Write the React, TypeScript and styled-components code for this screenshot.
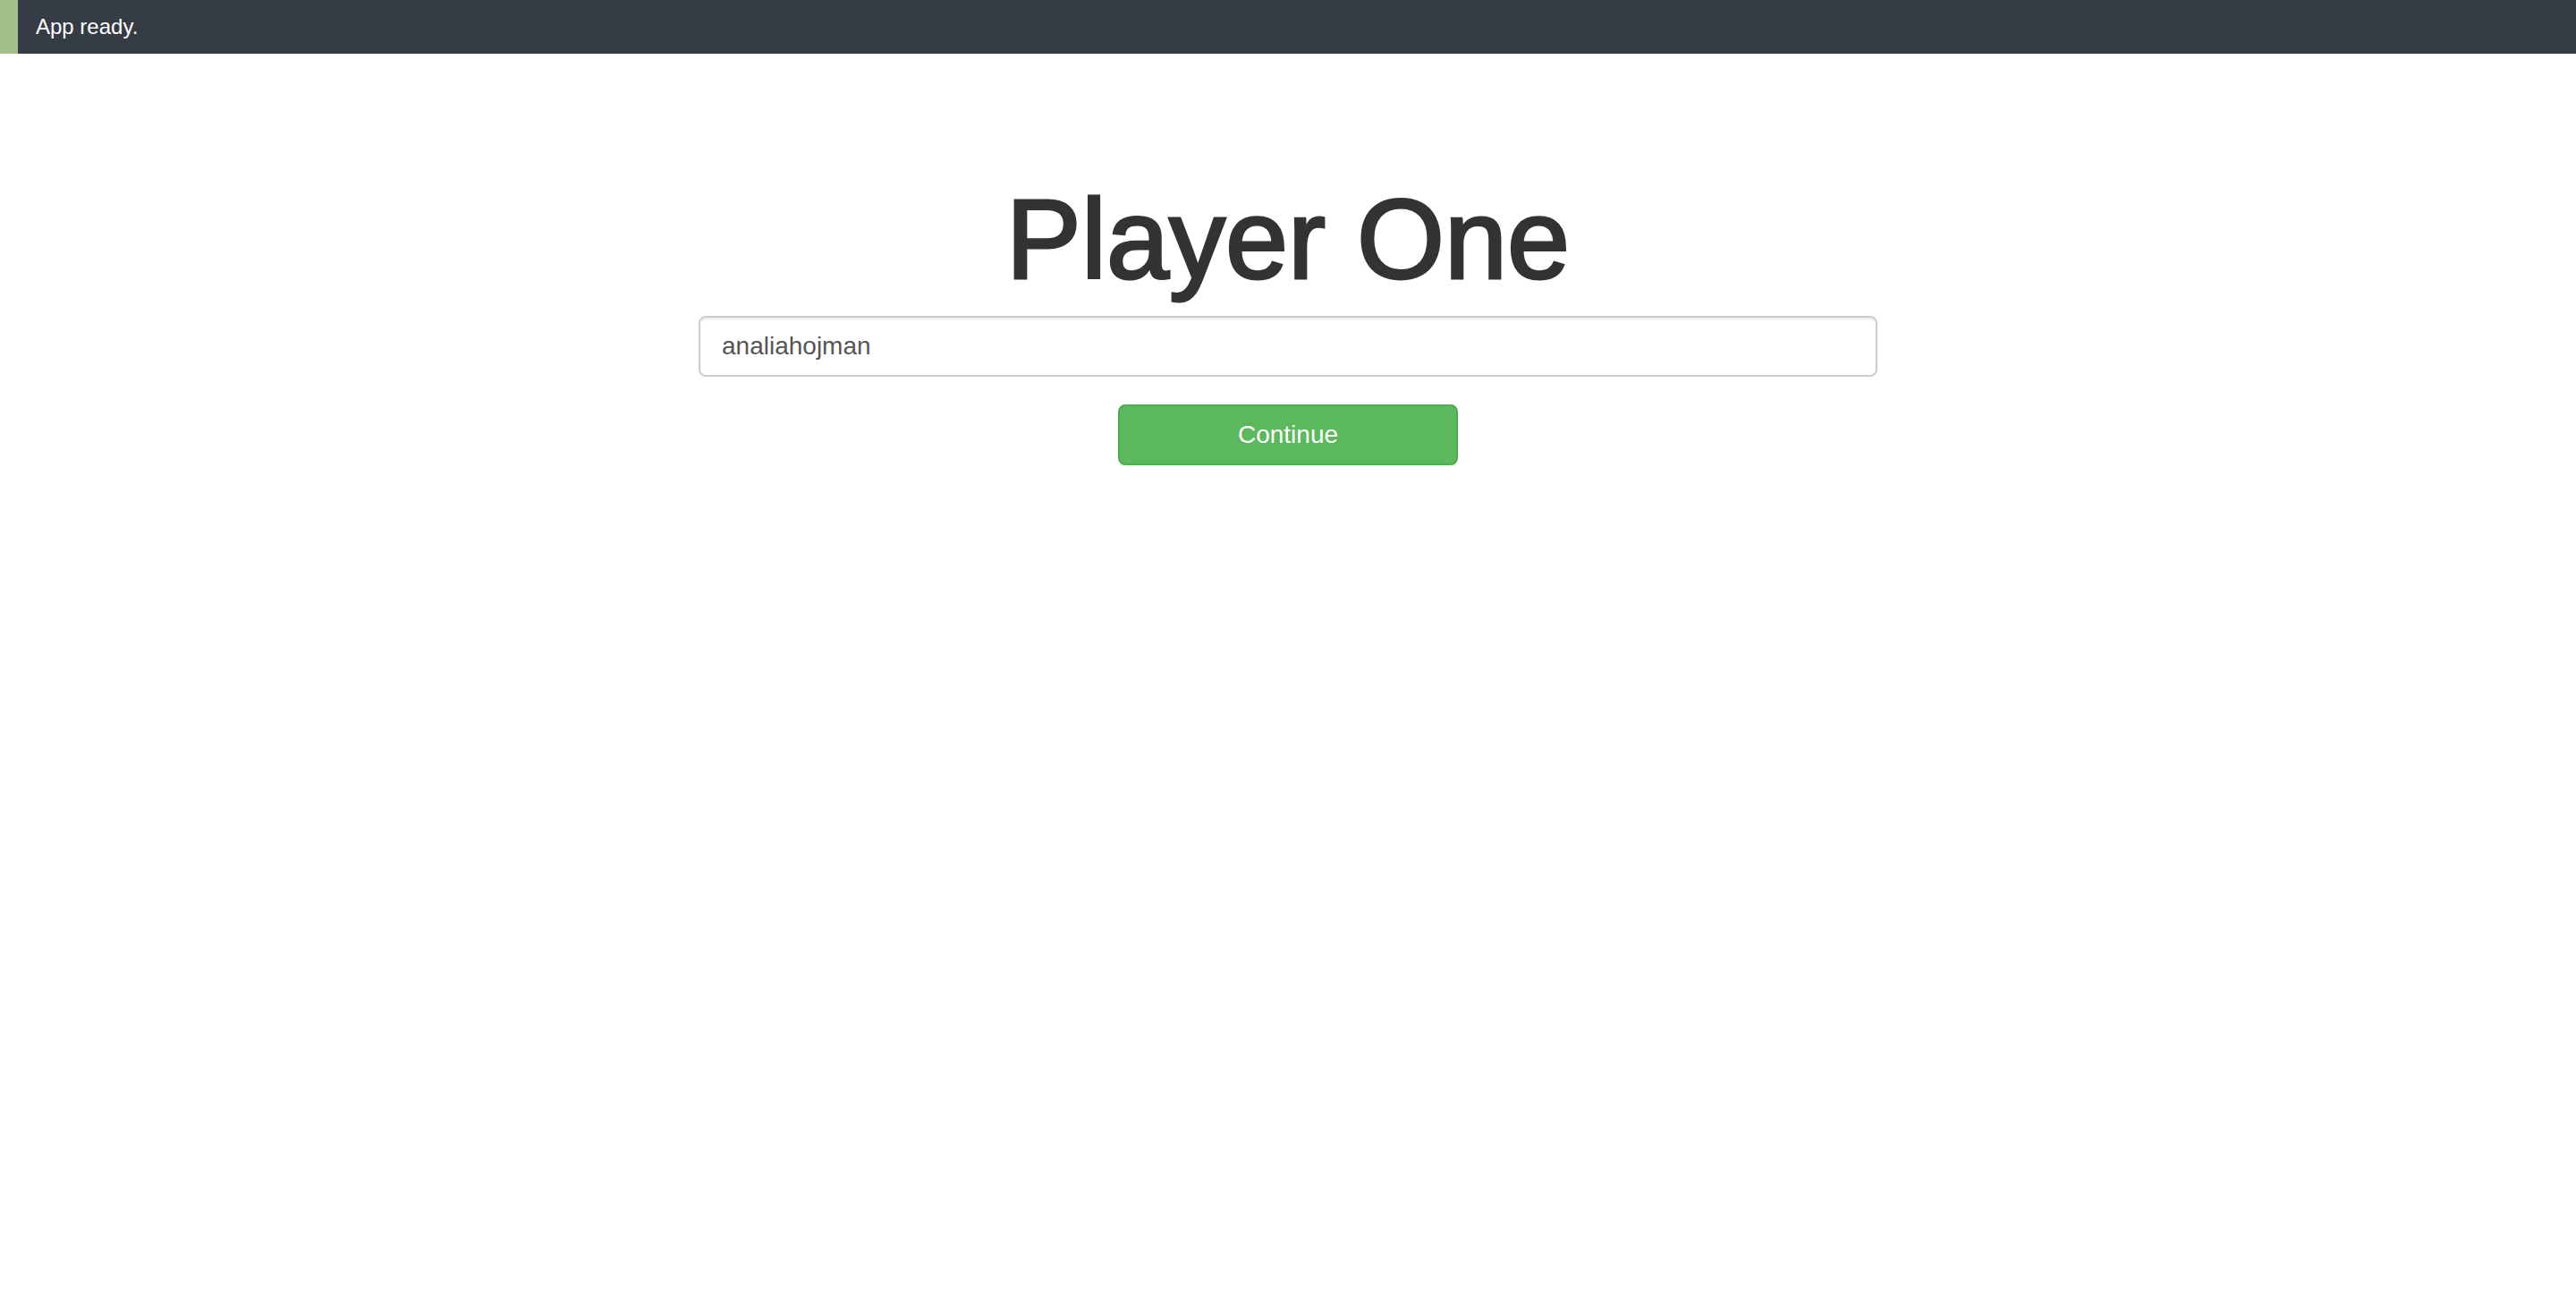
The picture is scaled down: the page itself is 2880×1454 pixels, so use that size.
import React from "react";
import styled, { createGlobalStyle } from "styled-components";

const GlobalStyle = createGlobalStyle`
  html, body {
    margin: 0;
    padding: 0;
    background: #ffffff;
    font-family: "Liberation Sans", Arial, Helvetica, sans-serif;
  }
  * { box-sizing: border-box; }
`;

const Page = styled.div`
  min-height: 1454px;
  background: #ffffff;
`;

const StatusBar = styled.div`
  height: 60px;
  display: flex;
  align-items: center;
  background: #363c46;
  border-left: 20px solid #a2bf8a;
  padding-left: 20px;
  color: #ffffff;
  font-size: 24px;
`;

const Main = styled.main`
  display: flex;
  flex-direction: column;
  align-items: center;
  padding-top: 139px;
`;

const Title = styled.h1`
  margin: 0 0 16px;
  font-size: 126px;
  line-height: 138px;
  font-weight: 400;
  color: #333333;
  -webkit-text-stroke: 3px #333333;
`;

const NameInput = styled.input`
  width: 1318px;
  height: 68px;
  padding: 0 24px;
  border: 2px solid #cccccc;
  border-radius: 8px;
  box-shadow: inset 0 2px 2px rgba(0, 0, 0, 0.075);
  font-family: "Liberation Sans", Arial, Helvetica, sans-serif;
  font-size: 28px;
  color: #555555;
  background: #ffffff;
  outline: none;
`;

const PrimaryButton = styled.button`
  margin-top: 31px;
  width: 380px;
  height: 68px;
  background: #5cb85c;
  border: 2px solid #4cae4c;
  border-radius: 8px;
  color: #ffffff;
  font-family: "Liberation Sans", Arial, Helvetica, sans-serif;
  font-size: 28px;
  cursor: pointer;
`;

export default function App() {
  return (
    <Page>
      <GlobalStyle />
      <StatusBar>App ready.</StatusBar>
      <Main>
        <Title>Player One</Title>
        <NameInput type="text" defaultValue="analiahojman" />
        <PrimaryButton type="button">Continue</PrimaryButton>
      </Main>
    </Page>
  );
}
